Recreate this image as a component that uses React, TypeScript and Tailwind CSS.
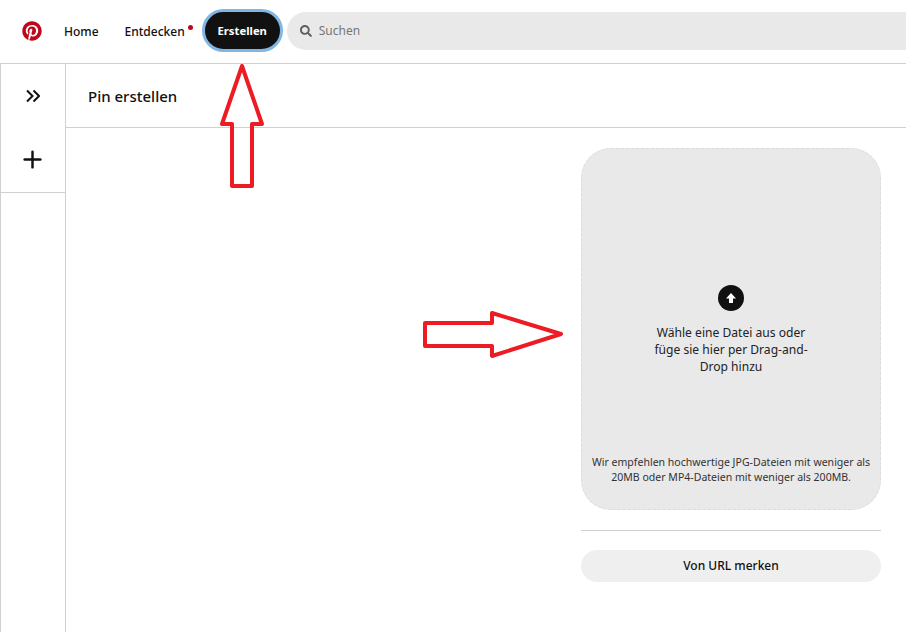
import { Plus } from 'lucide-react'
import { FaPinterest, FaSearch } from 'react-icons/fa'

function NavLink({ label }: { label: string }) {
  return <span className="block translate-y-[1px] text-[12px] font-medium text-[#111] leading-none">{label}</span>
}

export default function App() {
  return (
    <div className="relative w-[906px] h-[632px] overflow-hidden bg-white font-['Noto_Sans',sans-serif] text-[#111]">
      {/* top bar */}
      <header className="h-[64px] border-b border-[#d0d0d0] flex items-center pl-[22px] pb-[2px]">
        <FaPinterest className="w-[20px] h-[20px] text-[#bd081c] shrink-0" />
        <div className="ml-[22px]"><NavLink label="Home" /></div>
        <div className="ml-[26px] relative"><NavLink label="Entdecken" />
          <span className="absolute -right-[8px] top-0 w-[5px] h-[5px] rounded-full bg-[#bd081c]" />
        </div>
        <button className="ml-[17px] w-[81px] h-[43px] pt-[1px] rounded-full bg-[#111] border-[3px] border-[#7fb6e6] text-white text-[11.3px] font-bold">
          Erstellen
        </button>
        <div className="ml-[4px] flex-1 h-[38px] bg-[#e9e9e9] rounded-l-full flex items-center pl-[13px] gap-[7px]">
          <FaSearch className="w-[12px] h-[12px] text-[#5f5f5f]" />
          <span className="pt-[1px] text-[12px] text-[#767676]">Suchen</span>
        </div>
      </header>

      <div className="flex h-[568px]">
        {/* sidebar */}
        <aside className="w-[66px] shrink-0 border-l border-r border-[#d0d0d0] flex flex-col">
          <div className="h-[64px] flex items-center justify-center">
            <svg width="14" height="14" viewBox="0 0 14 14" fill="none" stroke="#111" strokeWidth="2">
              <path d="M1 1.5 L6.5 7 L1 12.5" />
              <path d="M7.5 1.5 L13 7 L7.5 12.5" />
            </svg>
          </div>
          <div className="h-[65px] border-b border-[#d0d0d0] flex items-center justify-center pb-[2px] pr-[1px]">
            <Plus className="w-[27px] h-[27px]" strokeWidth={2.2} />
          </div>
        </aside>

        <main className="flex-1 flex flex-col">
          <div className="h-[64px] border-b border-[#d0d0d0] flex items-center pl-[22px] pt-[2px]">
            <h1 className="text-[15px] font-medium">Pin erstellen</h1>
          </div>
          <div className="ml-[515px] w-[300px] pt-[20px]">
            <div className="h-[362px] rounded-[30px] bg-[#e9e9e9] border border-dashed border-[#dcdcdc] flex flex-col items-center px-[8px]">
              <div className="mt-[136px] w-[26px] h-[26px] rounded-full bg-[#111] flex items-center justify-center">
                <svg width="10" height="10" viewBox="0 0 10 10" fill="#fff">
                  <path d="M5 0 L10 5.5 H7 V10 H3 V5.5 H0 Z" />
                </svg>
              </div>
              <p className="mt-[13px] w-[170px] text-center text-[12.1px] leading-[17px] text-[#222]">
                Wähle eine Datei aus oder füge sie hier per Drag-and-Drop hinzu
              </p>
              <p className="mt-auto mb-[24px] text-center text-[10.55px] leading-[15px] text-[#333]">
                Wir empfehlen hochwertige JPG-Dateien mit weniger als 20MB oder MP4-Dateien mit weniger als 200MB.
              </p>
            </div>
            <div className="mt-[20px] border-t border-[#d0d0d0]" />
            <button className="mt-[19px] w-full h-[32px] rounded-full bg-[#efefef] text-[12px] font-medium text-[#111]">
              Von URL merken
            </button>
          </div>
        </main>
      </div>

      {/* annotation arrows */}
      <svg className="absolute left-0 top-0 pointer-events-none" width="906" height="632" fill="none">
        <path d="M242 66 L222 124 H232 V186 H252 V124 H262 Z" stroke="#ed1c24" strokeWidth="4" strokeLinejoin="round" />
        <path d="M425 323 H492 V313 L561 334 L492 356 V346 H425 Z" stroke="#ed1c24" strokeWidth="4" strokeLinejoin="round" />
      </svg>
    </div>
  )
}
